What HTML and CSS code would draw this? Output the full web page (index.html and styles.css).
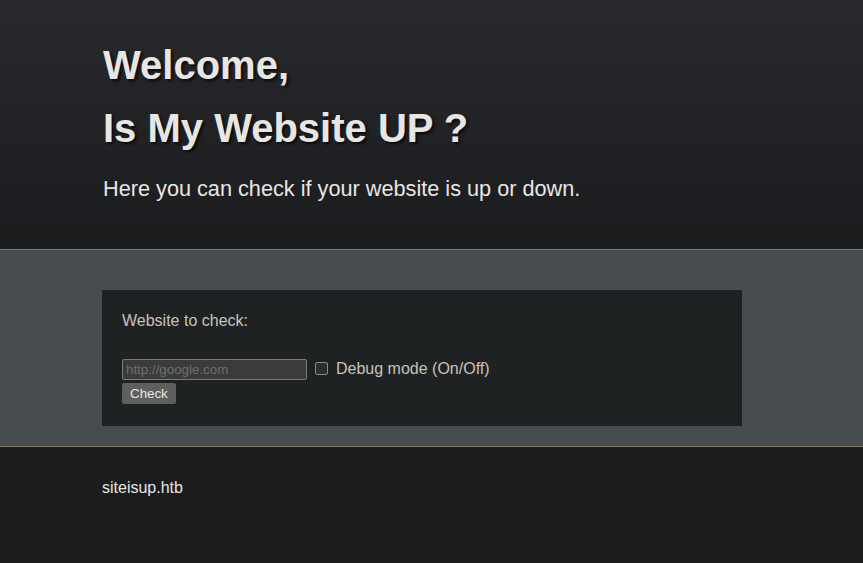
FILE: index.html
```html
<!DOCTYPE html>
<html lang="en">
<head>
<meta charset="utf-8">
<title>Is My Website UP ?</title>
<link rel="stylesheet" href="styles.css">
</head>
<body>
<header class="hero">
  <div class="container">
    <h1 class="hero-title">Welcome,<br>Is My Website UP ?</h1>
    <p class="hero-lead">Here you can check if your website is up or down.</p>
  </div>
</header>
<section class="main">
  <div class="container">
    <form class="card">
      <label class="card-label" for="site">Website to check:</label>
      <div class="row">
        <input id="site" class="url-input" type="text" placeholder="http://google.com">
        <input id="debug" class="check" type="checkbox">
        <label class="debug-label" for="debug">Debug mode (On/Off)</label>
      </div>
      <button class="btn" type="button">Check</button>
    </form>
  </div>
</section>
<footer class="footer">
  <div class="container">siteisup.htb</div>
</footer>
</body>
</html>
```

FILE: styles.css
```css
html, body {
  margin: 0;
  padding: 0;
}
body {
  font-family: "Liberation Sans", Arial, Helvetica, sans-serif;
  color: #e8e6e3;
  background: #1b1c1e;
}
.container {
  margin-left: 102px;
  width: 640px;
}
.hero {
  background: linear-gradient(to bottom, #27292c 0%, #1b1c1e 100%);
  padding: 34px 0 45px;
  border-bottom: 1px solid #7f7867;
}
.hero-title {
  margin: 0;
  padding-left: 1px;
  font-size: 40px;
  font-weight: bold;
  line-height: 63px;
  color: #e8e6e3;
  text-shadow: 2px 2px 3px rgba(0, 0, 0, 0.75);
}
.hero-lead {
  margin: 13px 0 0;
  padding-left: 1px;
  font-size: 21.7px;
  line-height: 31px;
  color: #e8e6e3;
}
.main {
  background: #464b4d;
  padding: 40px 0 20px;
  border-bottom: 1px solid #7f7867;
}
.card {
  background: #1f2223;
  padding: 20px 20px 22px;
  display: flex;
  flex-direction: column;
  align-items: flex-start;
}
.card-label {
  font-size: 16px;
  line-height: 22px;
  color: #c8c3bc;
}
.row {
  margin-top: 27px;
  display: flex;
  align-items: center;
  height: 22px;
}
.url-input {
  box-sizing: border-box;
  width: 185px;
  height: 21px;
  margin: 0;
  padding: 1px 3px;
  background: #3b3b3b;
  border: 1px solid #7a7a7a;
  border-radius: 2px;
  font-family: "Liberation Sans", Arial, sans-serif;
  font-size: 13.33px;
  color: #e8e6e3;
  align-self: flex-start;
}
.url-input::placeholder {
  color: #6e6e6e;
}
.check {
  appearance: none;
  -webkit-appearance: none;
  box-sizing: border-box;
  width: 13px;
  height: 13px;
  margin: 0 8px 0 8px;
  border: 1px solid #8a8a8a;
  border-radius: 2px;
  background: #2e2e2e;
  position: relative;
  top: -2px;
}
.debug-label {
  font-size: 16px;
  line-height: 22px;
  color: #c8c3bc;
  position: relative;
  top: -1px;
}
.btn {
  margin-top: 2px;
  height: 21px;
  padding: 0 8px;
  border: none;
  border-radius: 2px;
  background: #5f5f5f;
  color: #e8e6e3;
  font-family: "Liberation Sans", Arial, sans-serif;
  font-size: 13.33px;
  line-height: 21px;
}
.footer {
  padding: 30px 0 59px;
  font-size: 16px;
  line-height: 22px;
  color: #e8e6e3;
}
```
